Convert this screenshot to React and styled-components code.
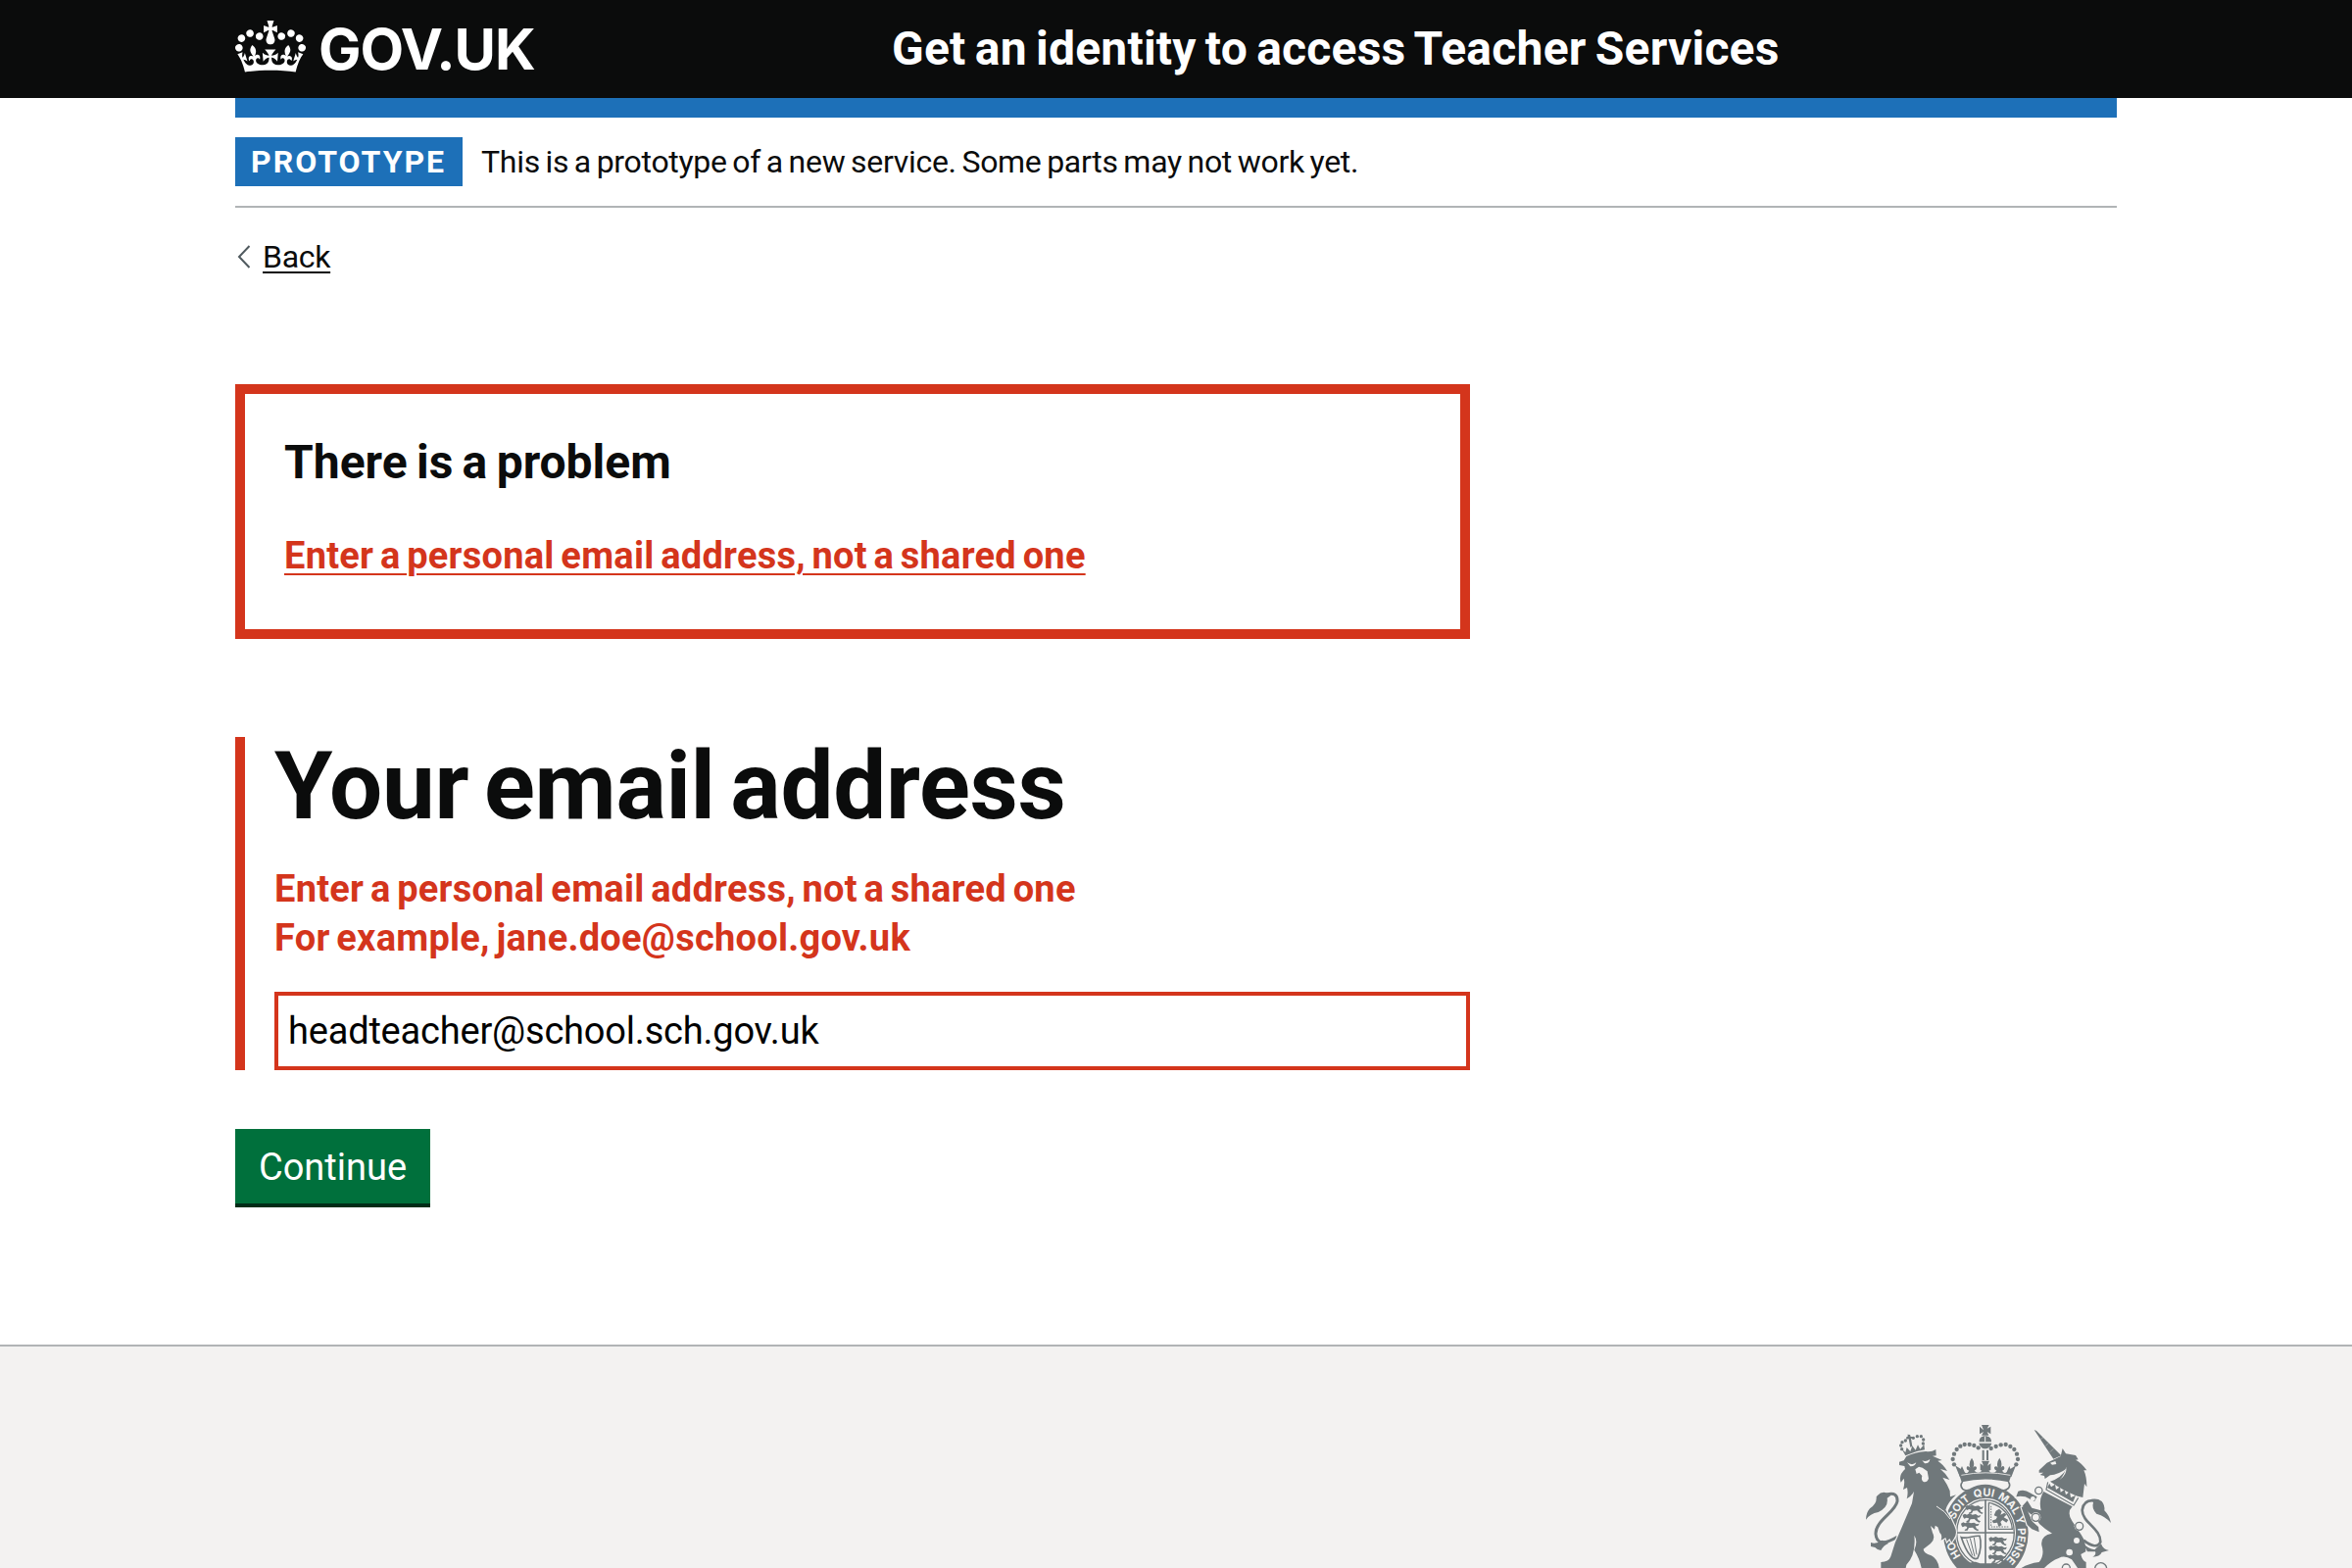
import React from "react";
import styled, { createGlobalStyle } from "styled-components";

const colour = {
  ink: "#0b0c0c",
  blue: "#1d70b8",
  red: "#d4351c",
  green: "#00703c",
  greenShade: "#002d18",
  rule: "#b1b4b6",
  panel: "#f3f2f1",
  crest: "#70787b",
};

const GlobalStyle = createGlobalStyle`
  *, *::before, *::after { box-sizing: border-box; }
  body {
    margin: 0;
    background: #fff;
    color: ${colour.ink};
    font-family: Roboto, "Liberation Sans", sans-serif;
  }
`;

const Page = styled.div`
  display: flex;
  flex-direction: column;
  height: 1600px;
  overflow: hidden;
`;

const Container = styled.div`
  width: 1920px;
  margin: 0 auto;
`;

const Header = styled.header`
  height: 100px;
  flex: none;
  background: ${colour.ink};
  color: #fff;
`;

const HeaderRow = styled(Container)`
  display: grid;
  grid-template-columns: 670px 1fr;
  align-items: center;
  height: 100px;
`;

const Logo = styled.a`
  display: flex;
  align-items: center;
  gap: 13px;
  color: #fff;
`;

const CrownIcon = styled.svg`
  width: 72px;
  height: 53px;
  margin-bottom: 5px;
  fill: currentColor;
`;

const LogoText = styled.span`
  font: 700 58px/100px Inter, "Liberation Sans", sans-serif;
  letter-spacing: -1.1px;
`;

const ServiceName = styled.span`
  font-size: 48px;
  font-weight: 700;
  line-height: 60px;
  white-space: nowrap;
  word-spacing: -3px;
  letter-spacing: 0.23px;
`;

const BlueBar = styled.div`
  height: 20px;
  background: ${colour.blue};
`;

const PhaseBanner = styled.div`
  display: flex;
  align-items: center;
  gap: 19px;
  padding: 20px 0;
  border-bottom: 2px solid ${colour.rule};
`;

const PhaseTag = styled.strong`
  width: 232px;
  padding-left: 16px;
  background: ${colour.blue};
  color: #fff;
  font-size: 32px;
  line-height: 50px;
  letter-spacing: 2px;
`;

const PhaseText = styled.span`
  font-size: 32px;
  line-height: 50px;
  word-spacing: -2px;
  letter-spacing: -0.29px;
`;

const BackLink = styled.a`
  display: flex;
  align-items: center;
  gap: 12px;
  width: max-content;
  margin-top: 30px;
  padding-left: 2px;
  font-size: 32px;
  line-height: 40px;
  letter-spacing: -0.3px;
`;

const Chevron = styled.svg`
  width: 14px;
  height: 24px;
  fill: none;
  stroke: #505a5f;
  stroke-width: 2;
`;

const Underlined = styled.span`
  text-decoration: underline;
  text-decoration-thickness: 2px;
  text-underline-offset: 4px;
`;

const TwoThirds = styled.main`
  width: 1260px;
`;

const ErrorSummary = styled.section`
  height: 260px;
  margin-top: 110px;
  padding: 40px;
  border: 10px solid ${colour.red};
`;

const SummaryTitle = styled.h2`
  margin: 0 0 40px;
  font-size: 48px;
  line-height: 60px;
  word-spacing: -2.6px;
`;

const ErrorText = styled.p`
  margin: 0;
  color: ${colour.red};
  font-size: 38px;
  font-weight: 700;
  line-height: 50px;
  word-spacing: -3px;
  letter-spacing: 0.25px;
`;

const SummaryLink = styled.a`
  text-decoration: underline;
  text-decoration-thickness: 2px;
  text-underline-offset: 5px;
`;

const FormGroup = styled.div`
  display: flex;
  flex-direction: column;
  margin-top: 100px;
  padding-left: 30px;
  border-left: 10px solid ${colour.red};
`;

const Title = styled.h1`
  margin: 0 0 30px;
  font-size: 96px;
  line-height: 100px;
  word-spacing: -8px;
  letter-spacing: -0.28px;
`;

const TextInput = styled.input`
  height: 80px;
  margin-top: 30px;
  padding: 0 10px;
  border: 4px solid ${colour.red};
  border-radius: 0;
  background: #fff;
  color: #000;
  font: 400 38px/50px Roboto, "Liberation Sans", sans-serif;
  letter-spacing: -0.2px;
`;

const Button = styled.button`
  display: block;
  width: 199px;
  height: 80px;
  margin-top: 60px;
  padding: 0 0 2px;
  border: 0;
  background: ${colour.green};
  box-shadow: inset 0 -4px 0 ${colour.greenShade};
  color: #fff;
  font: 400 38px/50px Roboto, "Liberation Sans", sans-serif;
`;

const Footer = styled.footer`
  flex: 1;
  margin-top: 140px;
  padding-top: 79px;
  border-top: 2px solid ${colour.rule};
  background: ${colour.panel};
`;

const FooterRow = styled(Container)`
  display: flex;
  justify-content: flex-end;
`;

const Crest = styled.svg`
  width: 256px;
  height: 147px;
  fill: ${colour.crest};

  .line { fill: none; stroke: ${colour.crest}; }
  .gap { fill: ${colour.panel}; }
  .gapline { fill: none; stroke: ${colour.panel}; }
  .edged { stroke: ${colour.panel}; stroke-width: 7; paint-order: stroke; }
  text {
    fill: ${colour.panel};
    font: 700 33px Inter, "Liberation Sans", sans-serif;
    text-anchor: middle;
  }
`;

const Crown = () => (
  <CrownIcon viewBox="0 0 132 97" aria-hidden="true">
    <path d="M25 30.2c3.5 1.5 7.7-.2 9.1-3.7 1.5-3.6-.2-7.8-3.9-9.2-3.6-1.4-7.6.3-9.1 3.9-1.4 3.5.3 7.5 3.9 9zM9 39.5c3.6 1.5 7.8-.2 9.2-3.7 1.5-3.6-.2-7.8-3.9-9.1-3.6-1.5-7.6.2-9.1 3.8-1.4 3.5.3 7.5 3.8 9zM4.4 57.2c3.5 1.5 7.7-.2 9.1-3.8 1.5-3.6-.2-7.7-3.9-9.1-3.5-1.5-7.6.3-9.1 3.8-1.4 3.5.3 7.6 3.9 9.1zm38.3-21.4c3.5 1.5 7.7-.2 9.1-3.8 1.5-3.6-.2-7.7-3.9-9.1-3.6-1.5-7.6.3-9.1 3.8-1.3 3.6.4 7.7 3.9 9.1zm64.4-5.6c-3.6 1.5-7.8-.2-9.1-3.7-1.5-3.6.2-7.8 3.8-9.2 3.6-1.4 7.7.3 9.2 3.9 1.3 3.5-.4 7.5-3.9 9zm15.9 9.3c-3.6 1.5-7.7-.2-9.1-3.7-1.5-3.6.2-7.8 3.7-9.1 3.6-1.5 7.7.2 9.2 3.8 1.5 3.5-.3 7.5-3.8 9zm4.7 17.7c-3.6 1.5-7.8-.2-9.2-3.8-1.5-3.6.2-7.7 3.9-9.1 3.6-1.5 7.7.3 9.2 3.8 1.3 3.5-.4 7.6-3.9 9.1zM89.3 35.8c-3.6 1.5-7.8-.2-9.2-3.8-1.4-3.6.2-7.7 3.9-9.1 3.6-1.5 7.7.3 9.2 3.8 1.4 3.6-.3 7.7-3.9 9.1zM69.7 17.7l8.9 4.7V9.3l-8.9 2.8c-.2-.3-.5-.6-.9-.9L72.4 0H59.6l3.5 11.2c-.3.3-.6.5-.9.9l-8.8-2.8v13.1l8.8-4.7c.3.3.6.7.9.9l-5 15.4v.1c-.2.8-.4 1.6-.4 2.4 0 4.1 3.1 7.5 7 8.1h.2c.3 0 .7.1 1 .1.4 0 .7 0 1-.1h.2c4-.6 7.1-4.1 7.1-8.1 0-.8-.1-1.7-.4-2.4V34l-5.1-15.4c.4-.2.7-.6 1-.9zM66 92.8c16.9 0 32.8 1.1 47.1 3.2 4-16.9 8.9-26.7 14-33.5l-9.6-3.4c1 4.9 1.1 7.2 0 10.2-1.5-1.4-3-4.3-4.2-8.7L108.6 76c2.8-2 5-3.2 7.5-3.3-4.4 9.4-10 11.9-13.6 11.2-4.3-.8-6.3-4.6-5.6-7.9 1-4.7 5.7-5.9 8-.5 4.3-8.7-3-11.4-7.6-8.8 7.1-7.2 7.9-13.5 2.1-21.1-8 6.1-8.1 12.3-4.5 20.8-4.7-5.4-12.1-2.5-9.5 6.2 3.4-5.2 7.9-2 7.2 3.1-.6 4.3-6.4 7.8-13.5 7.2-10.3-.9-10.9-8-11.2-13.8 2.5-.5 7.1 1.8 11 7.3L80.2 60c-4.1 4.4-8 5.3-12.3 5.4 1.4-4.4 8-11.6 8-11.6H55.5s6.4 7.2 7.9 11.6c-4.2-.1-8-1-12.3-5.4l1.4 16.4c3.9-5.5 8.5-7.7 10.9-7.3-.3 5.8-.9 12.8-11.1 13.8-7.2.6-12.9-2.9-13.5-7.2-.7-5 3.8-8.3 7.1-3.1 2.7-8.7-4.6-11.6-9.4-6.2 3.7-8.5 3.6-14.7-4.6-20.8-5.8 7.6-5 13.9 2.2 21.1-4.7-2.6-11.9.1-7.7 8.8 2.3-5.5 7.1-4.2 8.1.5.7 3.3-1.3 7.1-5.7 7.9-3.5.7-9-1.8-13.5-11.2 2.5.1 4.7 1.3 7.5 3.3l-4.7-15.4c-1.2 4.4-2.7 7.2-4.3 8.7-1.1-3-.9-5.3 0-10.2l-9.5 3.4c5 6.9 9.9 16.7 14 33.5 14.8-2.1 30.8-3.2 47.7-3.2z" />
  </CrownIcon>
);

const pearls = [
  [312, 163], [308, 147], [312, 131], [320, 117], [331, 107], [344, 102], [359, 102], [373, 105], [386, 112],
  [425, 114], [440, 108], [455, 103], [470, 102], [484, 108], [496, 117], [504, 131], [507, 147], [502, 163],
];

const smallPearls = [
  [152, 116], [149, 105], [153, 95], [163, 90], [187, 82], [199, 77], [211, 77], [218, 87], [217, 99],
];

const motto = [
  ["HO", "17%"], ["SOIT", "36.8%"], ["QUI", "49.3%"], ["MAL", "61.3%"], ["Y", "69.8%"], ["PENSE", "81.3%"],
];

const beast = "M0 6l7-4 6 3 8-4 9 4 10-2 8 5 8-2-4 7-8 1 4 8 7 3-4 4-9-5-6-6-12 1-4 8-9 1 1-4 5-2 2-6-7-2-7 3-3-4z";

const RoyalArms = () => (
  <Crest viewBox="42 39 768 441" role="img" aria-label="Royal coat of arms">
    <defs>
      <path id="garter" d="M408 481A99 110 0 0 1 408 260A99 110 0 0 1 408 481" />
    </defs>

    {/* Garter and quartered shield */}
    <ellipse cx="409" cy="372" rx="130" ry="147" />
    <ellipse cx="408" cy="372" rx="93" ry="106" className="gap" />
    <ellipse cx="408" cy="372" rx="88" ry="100" className="line" strokeWidth="4" />
    <path className="line" strokeWidth="5" d="M408 270V480M318 372H498" />
    <path className="line" strokeWidth="4" d="M418 280V361H490C487 320 460 288 418 280" />
    <path className="line" strokeWidth="3" d="M425 290v64h54" strokeDasharray="5 3" />
    {[[346, 286], [338, 312], [333, 338], [418, 383], [418, 410], [416, 437]].map(([x, y]) => (
      <path key={`${x}-${y}`} d={beast} transform={`translate(${x} ${y})`} />
    ))}
    <path d="M440 305l10-6 8 8-4 10 12-6 6 6-8 8 14 8-6 8-12-8-6 6 4 10-10 4-4-12-12 2-4-8 12-4 4-8-10-4z" />
    <path className="line" strokeWidth="5" d="M334 386C350 392 372 380 390 382C396 400 394 430 384 450C372 458 352 440 334 386Z" />
    <path className="line" strokeWidth="3" d="M350 392l18 50M361 389l14 56M373 387l8 52" />
    <path d="M352 480C354 462 372 456 392 466L424 466C440 460 454 468 458 480Z" />
    {motto.map(([word, offset]) => (
      <text key={word}>
        <textPath href="#garter" startOffset={offset}>{word}</textPath>
      </text>
    ))}

    {/* Imperial crown */}
    <path className="gap" d="M312 165L335 215L330 232Q345 250 362 240Q408 215 455 240Q475 250 484 232L482 212L504 165Z" />
    <path d="M402 58L396 42H419L413 53L424 47V70L413 63L418 74H396L402 63L390 70V47Z" />
    <path d="M389 94C388 82 397 76 407 76S427 82 426 94ZM388 98H427C424 108 416 115 407 115S391 108 388 98Z" />
    <path className="gapline" strokeWidth="3" d="M407 77V94" />
    <path d="M398 119H404V150H398ZM411 119H417V150H411Z" />
    {pearls.map(([x, y]) => <circle key={`${x}-${y}`} cx={x} cy={y} r="6.5" />)}
    <path d="M315 165L326 190L336 168L344 186Q350 195 358 182Q346 178 352 169Q358 167 361 173Q355 158 366 143Q377 158 370 173Q374 166 380 170Q384 178 374 182Q386 194 397 182L392 180V160L402 167L396 152H420L414 167L424 160V180L418 182Q430 195 442 182Q432 178 436 170Q442 166 446 173Q440 158 451 143Q461 158 455 173Q459 166 464 169Q470 178 459 182Q466 193 473 186L481 168L489 188L500 165Q488 188 480 217Q408 200 335 217Q328 190 315 165Z" />
    <path d="M315 166L334 178L342 192L330 202ZM501 166L483 178L475 192L487 202Z" />
    <path className="gapline" strokeWidth="2.5" d="M334 196Q408 181 484 196" />
    <path className="line" strokeWidth="5" d="M338 216Q328 226 338 238Q348 246 360 240Q408 214 455 240Q468 246 478 236Q486 226 478 216" />

    {/* Lion */}
    <path className="line" strokeWidth="9" d="M138 385Q76 422 72 376C70 335 132 310 138 276Q140 246 106 255" />
    <path d="M119 257Q92 238 74 262Q76 284 54 298Q42 312 42 332Q54 314 80 309Q112 294 107 266ZM57 402Q73 408 92 395L112 404Q96 410 88 426Q76 424 70 417L57 414Z" />
    <path className="edged" d="M166 138Q195 124 226 123Q242 126 256 117L257 136L246 137L275 150L262 152Q278 162 291 183L270 177Q286 190 298 210L277 203Q292 225 299 244L300 262L318 256Q292 280 286 302Q304 328 313 352Q324 376 310 392L304 401L298 390L290 399L286 387L272 395Q277 378 268 372L262 355L254 350L252 362L240 351L246 372Q256 390 240 405L218 422Q218 434 242 442Q262 452 266 480H212Q206 450 190 425Q202 398 190 380Q196 440 166 470L164 480H88V462Q112 462 118 445Q130 400 150 360L183 282L189 246Q180 262 167 268Q172 250 168 234L156 240Q162 220 158 206L149 218Q141 196 162 177L160 168L144 165V155L158 151Z" />
    <path d="M163 136L152 116L163 126L167 111L178 123L184 106L194 119L201 103L208 116L220 102L222 118Q192 122 163 136Z" />
    <path d="M171 76L169 71L177 72L179 78L186 78L186 84L180 83L184 108L178 110L173 85L166 86L165 80Z" />
    {smallPearls.map(([x, y]) => <circle key={`${x}-${y}`} cx={x} cy={y} r="5" />)}
    <path className="gapline" strokeWidth="3" d="M258 291Q285 305 300 330" />
    <path className="gap" d="M168 157Q184 168 196 157Q192 170 178 169ZM214 151Q226 157 238 147Q236 161 222 160ZM193 178L204 170L215 173L230 184L234 206Q229 219 218 216Q210 210 214 198L205 188L197 192Z" />

    {/* Unicorn */}
    <path d="M557 57L564 60L640 136L616 146Z" />
    <path className="gapline" strokeWidth="1" d="M577 86l8-6M592 106l9-8M606 125l10-10" />
    <path d="M572 181L596 158Q618 148 638 138L644 114L654 130L684 135L692 148L684 149Q702 158 718 181H709Q718 200 718 232L711 222L706 264L690 260Q650 246 606 215Q640 204 656 176Q630 194 606 196L590 207L588 198L575 195L585 188L572 188Z" />
    <path className="gap" d="M606 158L622 153L625 162L612 164ZM655 170Q658 194 635 210Q650 195 655 170Z" />
    <path className="line" strokeWidth="3.5" d="M599 217L594 240L678 288L692 265" />
    <path d="M597 234L604 221L609 232L621 224L624 240L636 232L638 248L650 240L654 256L666 246L669 264L684 258L676 278Z" />
    <path className="edged" d="M502 262L508 245Q528 238 544 250L566 262L558 276L530 262L514 260Z" />
    <path className="edged" d="M518 294L530 290L552 338L570 354L572 370L550 361L536 348Z" />
    <path d="M586 246L674 292Q656 310 673 336L701 378Q716 400 715 430L700 438Q704 458 716 462V480H690L672 454Q650 440 632 450Q610 458 588 480H518Q540 466 572 462Q590 440 580 410Q576 380 612 374Q588 360 574 346L560 326L540 310L521 290L536 274L550 296L578 304Q570 270 586 246Z" />
    {[[571, 243, 11], [562, 325, 12], [695, 352, 12], [655, 480, 12], [761, 482, 18]].map(([cx, cy, r]) => (
      <g key={cx}>
        <circle cx={cx} cy={cy} r={r + 3} className="gap" />
        <circle cx={cx} cy={cy} r={r} className="line" strokeWidth="4" />
      </g>
    ))}
    {[[553, 268, 7], [687, 396, 9], [665, 432, 10]].map(([cx, cy, r]) => (
      <circle key={cx} cx={cx} cy={cy} r={r} className="gap" />
    ))}
    <path className="line" strokeWidth="8" d="M708 395Q748 426 760 400C762 360 704 340 704 303Q708 270 742 274" />
    <path d="M732 270Q750 266 764 276Q774 288 772 304Q788 320 792 342Q776 322 748 314Q732 298 738 280ZM705 402L720 430L744 430Q748 440 736 446Q758 446 764 432L786 426Q768 424 762 406L742 424Q722 422 705 402Z" />
  </Crest>
);

export default function App() {
  return (
    <Page>
      <GlobalStyle />
      <Header>
        <HeaderRow>
          <Logo>
            <Crown />
            <LogoText>GOV.UK</LogoText>
          </Logo>
          <ServiceName>Get an identity to access Teacher Services</ServiceName>
        </HeaderRow>
      </Header>

      <Container>
        <BlueBar />
        <PhaseBanner>
          <PhaseTag>PROTOTYPE</PhaseTag>
          <PhaseText>This is a prototype of a new service. Some parts may not work yet.</PhaseText>
        </PhaseBanner>
        <BackLink>
          <Chevron viewBox="0 0 14 24">
            <path d="M12.5 1L2 12L12.5 23" />
          </Chevron>
          <Underlined>Back</Underlined>
        </BackLink>

        <TwoThirds>
          <ErrorSummary>
            <SummaryTitle>There is a problem</SummaryTitle>
            <ErrorText>
              <SummaryLink>Enter a personal email address, not a shared one</SummaryLink>
            </ErrorText>
          </ErrorSummary>

          <FormGroup>
            <Title>Your email address</Title>
            <ErrorText>Enter a personal email address, not a shared one</ErrorText>
            <ErrorText>For example, jane.doe@school.gov.uk</ErrorText>
            <TextInput type="text" defaultValue="headteacher@school.sch.gov.uk" />
          </FormGroup>
          <Button type="button">Continue</Button>
        </TwoThirds>
      </Container>

      <Footer>
        <FooterRow>
          <RoyalArms />
        </FooterRow>
      </Footer>
    </Page>
  );
}
